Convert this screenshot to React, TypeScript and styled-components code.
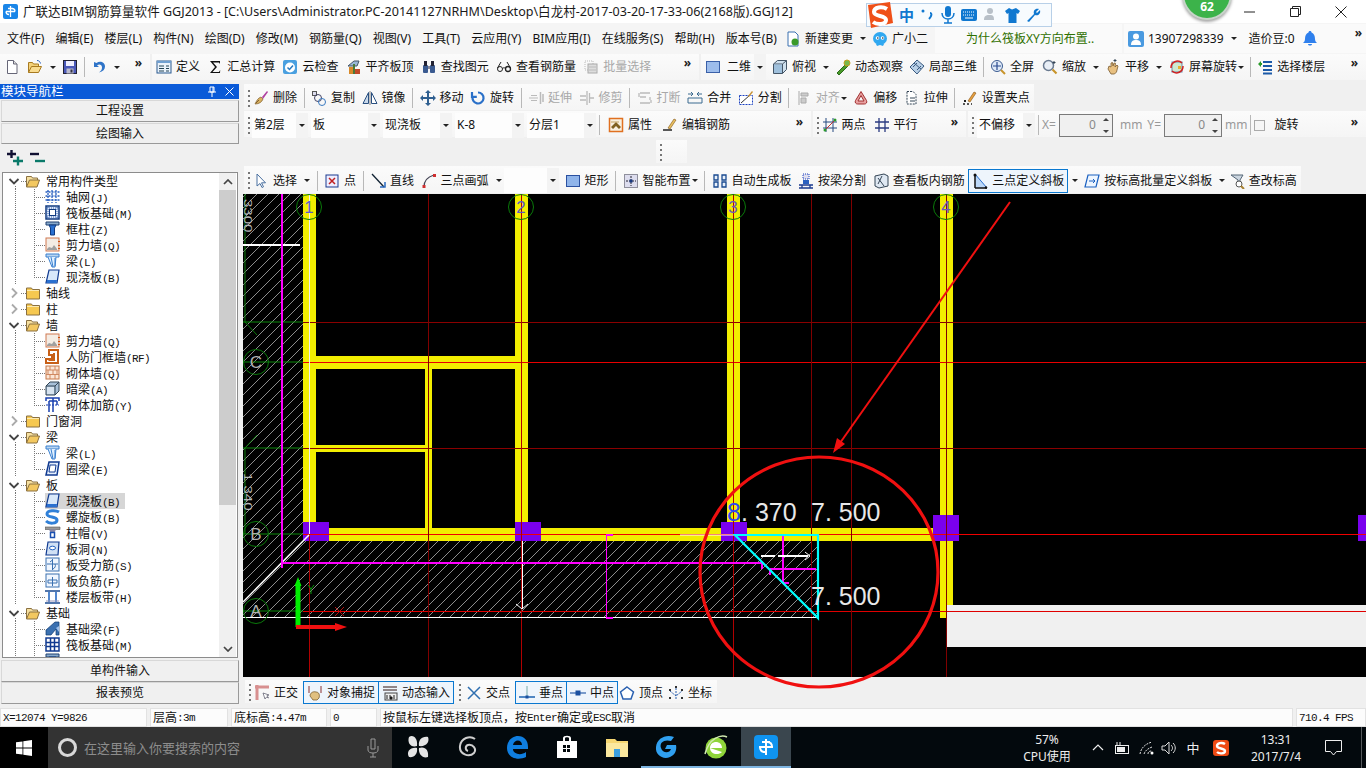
import React from 'react';
import styled, { createGlobalStyle } from 'styled-components';

const FONT = `"Noto Sans","Noto Sans CJK SC",sans-serif`;
const MONO = `"Liberation Mono","Noto Sans CJK SC",monospace`;

const Global = createGlobalStyle`
  html, body { margin: 0; padding: 0; background: #f0f0f0; overflow: hidden; }
  * { box-sizing: border-box; }
`;

const icons: Record<string, React.ReactNode> = {
  new: <><path d="M3.5 1.5h6l3.5 3.5v9.5h-9.5z" fill="#fff" stroke="#667" /><path d="M9.5 1.5v3.5h3.5" fill="#ddd" stroke="#667" /></>,
  open: <><path d="M1.5 13.5v-10h4l1 1.5h5v2.5" fill="#f4d27a" stroke="#a87a20" /><path d="M1.5 13.5l3-6h10l-3 6z" fill="#f9dc90" stroke="#a87a20" /><path d="M10 1.5c2 0 3 1 3.5 3" fill="none" stroke="#2a62c0" /></>,
  save: <><rect x="1.5" y="1.5" width="13" height="13" fill="#4a58b8" stroke="#223" /><rect x="4" y="2" width="8" height="5" fill="#eef" /><rect x="4.5" y="9.5" width="7" height="5" fill="#bbc" /><rect x="8.5" y="10.5" width="2" height="3" fill="#334" /></>,
  undo: <path d="M3 3v5h5L6 6.2c2.5-1.5 5-.5 5 2.2 0 2-1 3.5-3 5 4-.8 6-3.2 6-6 0-4-5-6.2-8.5-3.3z" fill="#2f74c8" />,
  define: <><rect x="1" y="2" width="14" height="12" fill="#eaf2fb" stroke="#2a5a90" /><rect x="1" y="2" width="14" height="2" fill="#6f9fd0" /><path d="M3 7h5M3 9.500h5M3 12h5M10 7h3M10 9.500h3M10 12h3" stroke="#245" /></>,
  sum: <path d="M3 2h10v3l-1-1.500H6l4 4.500-4.500 5H12l1.200-2L13 14H3l5-6z" fill="#111" />,
  cloud: <><rect x="1" y="1" width="14" height="14" rx="2" fill="#4aa0e0" /><circle cx="8" cy="8.500" r="5" fill="#fff" /><path d="M5.500 8.500l2 2 3.500-4" fill="none" stroke="#2a7ac0" strokeWidth="1.500" /></>,
  align: <><path d="M2 7l6-5 5-0-2 5z" fill="#9ab8d8" stroke="#456" /><rect x="3" y="8" width="4" height="7" fill="#d88a2a" /><rect x="9" y="10" width="5" height="5" fill="#c04a2a" /><rect x="7" y="5" width="2" height="10" fill="#4a7a3a" /></>,
  find: <><rect x="2" y="6" width="5" height="8" rx="1" fill="#3a5a90" /><rect x="9" y="6" width="5" height="8" rx="1" fill="#3a5a90" /><rect x="3" y="2" width="3" height="5" fill="#223" /><rect x="10" y="2" width="3" height="5" fill="#223" /><rect x="7" y="7" width="2" height="3" fill="#889" /></>,
  glasses: <><circle cx="4" cy="10" r="2.500" fill="none" stroke="#222" /><circle cx="12" cy="10" r="2.500" fill="none" stroke="#222" strokeWidth="1.300" /><path d="M6.500 9.500c1-1 2-1 3 0M1.500 9L5 3M14.500 9L11 3" fill="none" stroke="#222" /></>,
  batch: <><rect x="2" y="2" width="8" height="9" fill="none" stroke="#bbb" strokeDasharray="1 1" /><rect x="5" y="5" width="9" height="9" fill="#ddd" stroke="#aaa" /><path d="M6 8h7M6 11h7" stroke="#bbb" /></>,
  square: <rect x="1.500" y="2.500" width="13" height="11" fill="#9dbdec" stroke="#3a60a8" />,
  top: <><path d="M1.500 5l4-3.500h9v9l-4 4h-9z" fill="#cfe0ee" stroke="#456" /><path d="M1.500 5h9v9.500M10.500 5l4-3.500" fill="none" stroke="#456" /><rect x="2" y="5.500" width="8" height="8.500" fill="#9fc0dc" /></>,
  orbit: <><path d="M2 14l9-9 2 2-9 9z" fill="#4a9a2a" stroke="#2a6a1a" /><circle cx="12" cy="4" r="3" fill="#7ab84a" stroke="#c8a020" /></>,
  local3d: <><path d="M8 1l7 6-7 8-7-7z" fill="#b8cfe6" stroke="#3a5a80" /><path d="M5 4l7 6M4 8l4-4M8 11l4-4" stroke="#3a5a80" /></>,
  full: <><circle cx="7" cy="7" r="5.500" fill="#dfeaf8" stroke="#3a5a90" /><path d="M7 3v8M3 7h8" stroke="#2a4a90" strokeWidth="1.200" /><path d="M11 11l4 4" stroke="#c8942a" strokeWidth="2" /></>,
  zoom: <><circle cx="6.500" cy="6.500" r="5" fill="#e8eef6" stroke="#6a7a90" strokeWidth="1.500" /><path d="M10.500 10.500l4 4" stroke="#c8942a" strokeWidth="2.200" /><path d="M12 2v3M10.500 3.500h3" stroke="#345" /></>,
  pan: <><path d="M3 10l1-3 2 1V4l1.500-.5L8 7l1-3 1.500.3L10 8l2-2 1 1-1.500 6-2 2H6z" fill="#e8c080" stroke="#7a5a30" strokeWidth=".8" /><path d="M10 0v3M8.500 1.500h3" stroke="#345" /></>,
  rotate: <><rect x="3" y="3" width="10" height="10" fill="#cfe8d0" stroke="#68a" /><path d="M2 9a6.500 6.500 0 0 1 11-5M14 7a6.500 6.500 0 0 1-11 5" fill="none" stroke="#d02020" strokeWidth="1.500" /><rect x="9" y="7" width="3" height="3" fill="#e8b030" /></>,
  floor: <><path d="M6 3h9M6 7h9M6 11h9M6 14.500h9" stroke="#1c5aa8" strokeWidth="1.800" /><path d="M1 5l3-3v2h1v2H4v2z" fill="#2a9a2a" /></>,
  del: <><path d="M2 14c2-4 3-6 6-7l2 2c-1 3-4 5-8 5z" fill="#d8b060" stroke="#806030" strokeWidth=".7" /><path d="M9 7l5-6 1 1-5 7z" fill="#b040a0" /><path d="M3 13l3-3" stroke="#806030" /></>,
  copy: <><rect x="1.500" y="1.500" width="4" height="4" fill="#dde" stroke="#555" /><circle cx="7" cy="8" r="3.500" fill="none" stroke="#446" /><circle cx="11" cy="12" r="3.500" fill="none" stroke="#3a7ac0" /></>,
  mirror: <><path d="M6.500 2.500v11h-5.500z" fill="#c8d8ea" stroke="#2a5080" /><path d="M9.500 2.500v11h5.500z" fill="#fff" stroke="#2a5080" /><path d="M8 1v14" stroke="#888" /></>,
  move: <path d="M8 0l3 3H9v4h4V5l3 3-3 3V9H9v4h2l-3 3-3-3h2V9H3v2L0 8l3-3v2h4V3H5z" fill="#2f5f90" />,
  rot: <path d="M8 2.500a5.500 5.500 0 1 1-5.200 3.800M2 2v4.800h4.800" fill="none" stroke="#2a70c8" strokeWidth="2.200" />,
  ext: <><path d="M1 8h9M3 5.500h6M3 10.500h6" stroke="#bbb" /><path d="M12.500 2v12M15 4v8" stroke="#bbb" strokeWidth="1.500" /></>,
  trim: <path d="M8 1v14M10.500 3v10M1 6h6M1 10h6M11 8h4" stroke="#bbb" strokeWidth="1.300" />,
  brk: <path d="M3 3h10M3 7h6M13 7v3M3 13h10M2 3v4M14 10v3" stroke="#bbb" strokeWidth="1.300" fill="none" />,
  merge: <path d="M1 4h5M15 4h-5M1 8h14M1 13h14M1 8v5M15 8v5M4 2l2 2-2 2M12 2l-2 2 2 2" stroke="#3a6a90" fill="none" />,
  split: <><rect x="1.500" y="5.500" width="13" height="9" fill="#fff" stroke="#1a40c0" strokeDasharray="2 1" /><path d="M3 13l9-8" stroke="#333" /><path d="M10 6l4-5 1 1-4 5z" fill="#c89030" /></>,
  align2: <><path d="M3 1v14" stroke="#aaa" /><path d="M5 3h7v3H5zM5 8h5v5H5z" fill="#ccc" stroke="#aaa" /></>,
  offset: <path d="M8 1.500l5.500 9c1 2-.5 3.500-2 3.500H4.500c-1.500 0-3-1.500-2-3.500zM8 5.500l-3 5.500h6z" fill="#e8a0a0" stroke="#a03030" />,
  stretch: <><path d="M3 1.500h6l3 3V14H3z" fill="#fff" stroke="#345" strokeDasharray="2 1" /><path d="M6 8h5M6 11h5" stroke="#345" /></>,
  pts: <><path d="M1 14h9" stroke="#222" strokeDasharray="2 2" strokeWidth="1.500" /><path d="M6 11l6-9 2 1-6 9z" fill="#e8a040" stroke="#805010" strokeWidth=".6" /><rect x="2" y="10" width="2" height="2" fill="#222" /></>,
  prop: <><rect x="1.500" y="1.500" width="13" height="13" fill="#f8f0e0" stroke="#e07020" strokeWidth="1.500" /><path d="M3 10l5-5 5 5-2 2-3-3-3 3z" fill="#806020" /><path d="M3 5h8" stroke="#c0a060" /></>,
  edit: <><path d="M1 13h9" stroke="#222" strokeWidth="1.500" /><path d="M6 11l6-9 2 1-6 9z" fill="#e8c060" stroke="#805010" strokeWidth=".6" /></>,
  two: <><path d="M4 1v14M11 1v14M1 5h14M1 11h14" stroke="#264a80" /><path d="M2 14L14 2" stroke="#c03030" /><circle cx="3" cy="13" r="1.500" fill="#2a9a2a" /><circle cx="13" cy="3" r="1.500" fill="#2a9a2a" /></>,
  par: <path d="M5 1v14M11 1v14M1 5h14M1 11h14" stroke="#2a3a80" strokeWidth="1.300" />,
  sel: <path d="M4 1v12l3-2.500 2 4 1.500-.7-2-4h4z" fill="#fff" stroke="#4a70a0" />,
  point: <><rect x="2" y="2" width="12" height="12" fill="#eef" stroke="#1a3a90" /><path d="M5 5l6 6M11 5l-6 6" stroke="#c02020" strokeWidth="1.500" /></>,
  line: <><path d="M2 1l12 13" stroke="#123" strokeWidth="1.300" /><path d="M10 14h5V9" fill="none" stroke="#2a6ac0" strokeWidth="1.500" /></>,
  arc: <><path d="M3 14C3 8 6 4 13 2" fill="none" stroke="#445" strokeWidth="1.300" /><rect x="1.500" y="12" width="3" height="3" fill="#d03030" /><rect x="12" y="1" width="3" height="3" fill="#d03030" /></>,
  rect: <rect x="1.500" y="2.500" width="13" height="11" fill="#8fb4ea" stroke="#2a50a0" />,
  smart: <><rect x="1.500" y="1.500" width="13" height="13" fill="#dde" stroke="#334" strokeDasharray="1 1" /><path d="M8 3v10M3 8h10" stroke="#223" strokeDasharray="2 1" /><rect x="6.500" y="6.500" width="3" height="3" fill="#1a3a80" /></>,
  auto: <path d="M2 2h4v5H2zM10 2h4v5h-4zM2 9h4v5H2zM10 9h4v5h-4z" fill="#e8f0fa" stroke="#1a4a90" strokeWidth="1.300" />,
  bybeam: <><rect x="5" y="1" width="6" height="5" fill="#dde" stroke="#1a40c0" strokeDasharray="1 1" /><rect x="5" y="7" width="6" height="4" fill="#2a60c0" /><path d="M1 12h14M1 15h14M4 12v3M12 12v3" stroke="#1a3a90" strokeWidth="1.300" /></>,
  viewr: <><path d="M2 3l9-2 4 2v10l-9 2-4-2z" fill="#dfe8f2" stroke="#345" /><path d="M5 5l6 8M9 3l-4 8" stroke="#345" /></>,
  three: <><path d="M3 1v14h12z" fill="#bcd8f8" /><path d="M3 1v14M3 15h12" stroke="#111" strokeWidth="1.500" /><path d="M3 1l12 14" stroke="#2a70d0" /><circle cx="3" cy="2" r="1.500" fill="#111" /><circle cx="14" cy="14.500" r="1.200" fill="#111" /></>,
  slope: <><path d="M4 2h11l-3 12H1z" fill="#eef6ff" stroke="#1a60c0" strokeWidth="1.200" /><path d="M5 8h6M9 6l2 2-2 2" stroke="#1a60c0" fill="none" /></>,
  level: <><path d="M2 2h12l-3 5v2l-2 1V7z" fill="#ccd6e0" stroke="#567" /><circle cx="10" cy="11" r="3" fill="#fff" stroke="#555" /><path d="M12 13l3 3" stroke="#a88030" strokeWidth="2" /></>,
  ortho: <><path d="M1 2h14M3 0v15" stroke="#d89090" strokeWidth="3" /><path d="M9 8l2 6 1.500-2 2 1-1.500-2.500 2-.5z" fill="#fff" stroke="#556" strokeWidth=".7" /></>,
  snap: <><path d="M2 1v7M14 1v7" stroke="#883030" /><path d="M3 11c0-3 3-5 6-4 3 0 4 3 3 6l-2 2H6z" fill="#e0c080" stroke="#705020" strokeWidth=".7" /></>,
  dyn: <><path d="M1 2h14M1 5h14" stroke="#706060" strokeWidth="1.300" /><rect x="3" y="8" width="12" height="7" fill="#eee" stroke="#444" /><path d="M5 10v4M8 10v4h2v-2H8M12 10v4" stroke="#222" /></>,
  inter: <path d="M2 2l12 12M14 2L2 14" stroke="#2f6fb0" strokeWidth="1.500" />,
  perp: <><path d="M0 12h16" stroke="#1a60b0" strokeWidth="1.500" /><path d="M8 1v10" stroke="#7aa" /><rect x="6.500" y="10.500" width="3" height="3" fill="#1a50a0" /></>,
  mid: <><path d="M0 8h16" stroke="#3a6ab0" strokeWidth="1.300" /><rect x="5.500" y="5.500" width="5" height="5" fill="#1a50a0" /></>,
  vertex: <path d="M8 2l6.500 5-2.500 7H4L1.500 7z" fill="#fff" stroke="#2a60b0" strokeWidth="1.500" />,
  coord: <><path d="M8 3v12M2 6l6 5 6-5" stroke="#2a60b0" fill="none" strokeDasharray="2 1" /><rect x="1" y="4" width="2" height="2" fill="#333" /><rect x="7" y="1" width="2" height="2" fill="#333" /><rect x="13" y="4" width="2" height="2" fill="#333" /><rect x="1" y="12" width="2" height="2" fill="#333" /><rect x="13" y="12" width="2" height="2" fill="#333" /></>,
  doc: <><path d="M3 1h7l3 3v11H3z" fill="#fff" stroke="#3a70b0" /><circle cx="10" cy="11" r="3.500" fill="#3a9a2a" /></>,
  mascot: <><ellipse cx="8" cy="7.500" rx="7" ry="6.500" fill="#30a8f0" /><path d="M4 13l1 2 3-1 3 1 1-2z" fill="#30a8f0" /><circle cx="5.500" cy="7" r="1.800" fill="#fff" /><circle cx="10.500" cy="7" r="1.800" fill="#fff" /><circle cx="5.800" cy="7" r=".8" fill="#123" /><circle cx="10.800" cy="7" r=".8" fill="#123" /></>,
  user: <><rect x="0" y="0" width="16" height="16" rx="2" fill="#4a9ae0" /><circle cx="8" cy="5.500" r="3" fill="#fff" /><path d="M3 14c0-4 2-5 5-5s5 1 5 5z" fill="#fff" /></>,
  bell: <path d="M8 0c1 0 1.500.7 1.500 1.500C12 2.500 13 5 13 8c0 2 1 3 2 4H1c1-1 2-2 2-4 0-3 1-5.500 3.500-6.500C6.500.7 7 0 8 0zM6 13h4c0 2-4 2-4 0z" fill="#2f80ed" />,
  plus: <><path d="M0 4h9M4.500 0v8" stroke="#113" strokeWidth="2.400" /><path d="M6 11h10M11 6.500v9" stroke="#0a7a6a" strokeWidth="2.400" /></>,
  minus: <><path d="M1 4h9" stroke="#113" strokeWidth="2.400" /><path d="M6 11h10" stroke="#0a7a6a" strokeWidth="2.400" /></>,
  folderO: <><path d="M1.500 14V3.500h5l1 1.500h5v2" fill="#f6e0a0" stroke="#8a7040" /><path d="M1.500 14l3-7h10l-2.500 7z" fill="#f3c860" stroke="#8a7040" /></>,
  folderC: <><path d="M1.500 14V3h5l1 1.500h7V14z" fill="#f6c850" stroke="#8a7040" /><path d="M2 5.500h12" stroke="#fbe9b0" /></>,
  grid: <path d="M3 1v13M7 1v13M11 1v13M0.500 3h14M0.500 7h14M0.500 11h14" stroke="#2a60c0" strokeWidth="1.300" strokeDasharray="2 1" />,
  raft: <><rect x="1" y="1" width="13" height="13" fill="#dfe8f8" stroke="#103a80" strokeWidth="1.500" /><rect x="4.500" y="4.500" width="6" height="6" fill="#fff" stroke="#103a80" /><path d="M2 3h11M2 12h11M3 2v11M12 2v11" stroke="#3060b0" strokeDasharray="1 1" /></>,
  column: <><path d="M1 1h13v3H1z" fill="#88aacc" stroke="#204070" /><path d="M4 4h7l-1.500 3v7H5.500V7z" fill="#2a70d0" stroke="#103a80" /></>,
  shear: <><rect x="1" y="1" width="13" height="13" fill="#f4ece4" stroke="#d07850" /><path d="M2 12l2-2 3 1 2-3 3 4v1H2z" fill="#a0a0a0" /><path d="M14 4v1M14 8v1M14 11v1" stroke="#d05010" strokeWidth="2" /></>,
  beam: <><path d="M1 1h13v3H1z" fill="#b8d4f0" stroke="#3a80d0" /><path d="M3 4l4 10h3l1-10" fill="#e0f0ff" stroke="#3a80d0" /><path d="M6 4l2 10M10 5v8" stroke="#3a80d0" /></>,
  slab: <><path d="M4 1h10l-2 13H1z" fill="#d8e8fa" stroke="#103a90" strokeWidth="1.200" /><path d="M2 11h10l-.5 3H1.500z" fill="#2a70d0" /></>,
  shelter: <path d="M4 1h9v13H1v-4h6V6H4zM9 4v7H3.500" fill="none" stroke="#c86018" strokeWidth="2" />,
  masonry: <><rect x="1" y="1" width="13" height="13" fill="#fbe6d6" stroke="#c87848" /><path d="M1 5h13M1 9.500h13M5 1v4M10 1v4M3 5v4.500M8 5v4.500M12 5v4.500M5 9.500V14M10 9.500V14" stroke="#d08860" /></>,
  hidden: <><path d="M1 5l4-4h9v9l-4 4H1z" fill="#a8c0d8" stroke="#345" /><path d="M1 5h9v9M10 5l4-4" fill="none" stroke="#345" /><rect x="2" y="6" width="7" height="7" fill="#d8e4f0" /></>,
  rein: <><path d="M1 4V1h13v3M4 4h8M8 1v14M4 4v11M12 4v4" fill="none" stroke="#1a40b0" strokeWidth="1.500" /><path d="M1 8h13" stroke="#1a40b0" strokeDasharray="2 1" /></>,
  ring: <><path d="M4 1h10l-2 13H1z" fill="#e4eefc" stroke="#103a90" strokeWidth="1.500" /><path d="M5 4h6l-1 7H4z" fill="#fff" stroke="#103a90" /></>,
  spiral: <path d="M14 3c-3-2-12-2-12 2s10 2 10 6-8 4-11 1" fill="none" stroke="#3080d8" strokeWidth="3" />,
  cap: <><path d="M0 2h15v2.500H0z" fill="#999" stroke="#555" strokeWidth=".6" /><path d="M4 4.500h7l-1.500 3h-4z" fill="#88a" /><rect x="5.500" y="7.500" width="4" height="5" fill="#fff" stroke="#1a50b0" strokeWidth="1.500" /></>,
  hole: <><path d="M3 1h11l-1 13H1z" fill="#d0e0f4" stroke="#103a90" strokeWidth="1.200" /><ellipse cx="7.500" cy="7" rx="3" ry="1.800" fill="#fff" stroke="#2060c0" /></>,
  rebarS: <><rect x="1" y="1" width="13" height="13" fill="#f0f6fe" stroke="#3a70b0" /><path d="M7.500 2v11M2 7h11M5 5l2.500-2M10 7c1 2 0 4-2 5" stroke="#3a70b0" fill="none" /></>,
  rebarF: <><rect x="1" y="1" width="13" height="13" fill="#f0f6fe" stroke="#3a70b0" /><path d="M7.500 4v9M3 7h9M3 10h9M3 7v3M12 7v3" stroke="#3a70b0" fill="none" /></>,
  band: <><path d="M0 2h15M0 14h15" stroke="#1a4a90" strokeWidth="1.500" /><path d="M4 3v10M11 3v10" stroke="#1a60c0" strokeWidth="1.500" /><path d="M1 12h13" stroke="#99b" /></>,
  fbeam: <><path d="M1 14V9L10 1h4v13h-3V8l-5 6z" fill="#3a70b0" stroke="#103a70" strokeWidth=".7" /><path d="M11 7l3-2v6z" fill="#9fc0ea" /></>,
  raft2: <><rect x="1" y="1" width="13" height="13" fill="#fff" stroke="#103a90" strokeWidth="1.500" /><path d="M5.500 1v13M9.500 1v13M1 5.500h13M1 9.500h13" stroke="#103a90" strokeWidth="1.500" /></>,
};

const Svg = styled.svg`
  flex: none;
  display: block;
`;
const Ic: React.FC<{ n: string; s?: number }> = ({ n, s = 16 }) => (
  <Svg width={s} height={s} viewBox="0 0 16 16">{icons[n]}</Svg>
);

const Root = styled.div`
  position: relative;
  width: 1366px;
  height: 768px;
  display: flex;
  flex-direction: column;
  overflow: hidden;
  background: #f0f0f0;
  font: 12px/16px ${FONT};
  color: #111;
`;

/* ---------- title ---------- */
const TitleBar = styled.header`
  height: 23px;
  background: #fff;
  display: flex;
  align-items: center;
  padding-left: 3px;
`;
const TitleText = styled.div`
  margin-left: 5px;
  font-size: 12.55px;
  white-space: nowrap;
  color: #1a1a1a;
`;
const WinControls = styled.div`
  margin-left: auto;
  margin-right: 2px;
  display: flex;
`;
const WinBtn = styled.div`
  width: 46px;
  height: 23px;
  display: flex;
  align-items: center;
  justify-content: center;
`;

/* ---------- menu ---------- */
const MenuBar = styled.nav`
  height: 31px;
  background: #f5f5f5;
  display: flex;
  align-items: center;
  padding-left: 7px;
  white-space: nowrap;
`;
const MenuItem = styled.span`
  margin-right: 11.15px;
`;
const MenuTool = styled.span<{ $ml?: number }>`
  display: inline-flex;
  align-items: center;
  gap: 4px;
  margin-left: ${p => p.$ml ?? 0}px;
  margin-right: 6px;
`;
const NewsPanel = styled.div`
  margin-left: 1px;
  width: 187px;
  height: 29px;
  background: #fafafa;
  color: #2f7000;
  display: flex;
  align-items: center;
  padding-left: 31px;
`;
const UserPanel = styled.div`
  margin-left: 2px;
  flex: 1;
  height: 29px;
  background: #fafafa;
  display: flex;
  align-items: center;
  padding-left: 4px;
  gap: 4px;
`;
const UserNote = styled.span<{ $ml: number }>`
  margin-left: ${p => p.$ml}px;
  display: inline-flex;
`;
const More = styled.span`
  font-size: 12px;
  font-weight: 700;
  line-height: 12px;
  align-self: flex-start;
  margin-top: 3px;
  color: #222;
`;
const PushRight = styled(More)`
  margin-left: auto;
  margin-right: 4px;
`;

/* ---------- toolbars ---------- */
const TopTools = styled.div`
  height: 29px;
  padding-bottom: 3px;
  display: flex;
  align-items: stretch;
  gap: 2px;
`;
const Bar = styled.div<{ $w?: number; $gap?: number }>`
  ${p => (p.$w ? `width:${p.$w}px;flex:none;` : '')}
  background: linear-gradient(#fbfbfb, #f5f5f5);
  display: flex;
  align-items: center;
  gap: ${p => p.$gap ?? 6.5}px;
  padding: 0 4px;
  white-space: nowrap;
`;
const BarFill = styled(Bar)`
  flex: 1;
`;
const Row = styled.div<{ $h: number; $mt: number; $pl?: number }>`
  height: ${p => p.$h}px;
  margin-top: ${p => p.$mt}px;
  padding-left: ${p => p.$pl ?? 4}px;
  display: flex;
  align-items: stretch;
  gap: 2px;
  & > div { padding-top: 2px; }
`;
const Grip = styled.i<{ $ml?: number }>`
  flex: none;
  width: 2px;
  height: 17px;
  background: repeating-linear-gradient(#777 0 2px, transparent 2px 5px);
  margin-left: ${p => p.$ml ?? 0}px;
  margin-right: -3.5px;
`;
const Sep = styled.i`
  flex: none;
  width: 1px;
  height: 20px;
  background: #b8b8b8;
`;
const ToolBtn = styled.span<{ $d?: boolean; $ml?: number }>`
  display: inline-flex;
  align-items: center;
  gap: 4px;
  flex: none;
  color: ${p => (p.$d ? '#a8a8a8' : '#111')};
  margin-left: ${p => p.$ml ?? 0}px;
`;
const Caret = styled.i<{ $tight?: boolean }>`
  width: 0;
  height: 0;
  flex: none;
  margin-left: ${p => (p.$tight ? -3 : 3)}px;
  border-left: 3px solid transparent;
  border-right: 3px solid transparent;
  border-top: 3px solid #222;
`;
const Active = styled.span<{ $ml?: number }>`
  display: inline-flex;
  align-items: center;
  gap: 4px;
  height: 24px;
  padding: 0 3px;
  margin-left: ${p => p.$ml ?? 0}px;
  border: 1px solid #0a78d0;
  background: #eef5fc;
  flex: none;
`;
const Combo = styled.span<{ $w: number; $ml?: number }>`
  width: ${p => p.$w}px;
  height: 25px;
  flex: none;
  background: #fdfdfd;
  display: flex;
  align-items: center;
  justify-content: space-between;
  padding-left: 2px;
  margin-left: ${p => p.$ml ?? 0}px;
`;
const ComboArrow = styled.span<{ $ml?: number }>`
  width: 12px;
  height: 100%;
  background: #f3f3f3;
  display: flex;
  align-items: center;
  justify-content: center;
  margin-left: ${p => p.$ml ?? 0}px;
  flex: none;
  ${Caret} { margin: 0; }
`;
const Dim = styled.span<{ $ml?: number }>`
  color: #999;
  flex: none;
  margin-left: ${p => p.$ml ?? 0}px;
`;
const Spin = styled.span<{ $w: number }>`
  width: ${p => p.$w}px;
  height: 23px;
  flex: none;
  border: 1px solid #7a7a7a;
  background: #f0f0f0;
  color: #888;
  display: flex;
  align-items: center;
  justify-content: flex-end;
  padding-right: 3px;
  gap: 7px;
`;
const SpinArrows = styled.span`
  display: flex;
  flex-direction: column;
  gap: 9px;
`;
const Up = styled.i`
  border-left: 3px solid transparent;
  border-right: 3px solid transparent;
  border-bottom: 3px solid #444;
`;
const Down = styled.i`
  border-left: 3px solid transparent;
  border-right: 3px solid transparent;
  border-top: 3px solid #444;
`;
const Check = styled.i`
  width: 11px;
  height: 11px;
  flex: none;
  border: 1px solid #aaa;
  background: #f6f6f6;
`;
const StubBar = styled(Bar)`
  margin-left: 412px;
`;
const SnapBtn = styled(Active)`
  height: 23px;
  margin-right: -6px;
`;

/* ---------- main ---------- */
const Main = styled.main`
  height: 625px;
  display: flex;
`;
const Left = styled.aside`
  width: 240px;
  flex: none;
  padding: 1px 0 0 0;
  display: flex;
  flex-direction: column;
`;
const PanelHead = styled.div`
  height: 15px;
  width: 239px;
  background: #0a5ad8;
  color: #fff;
  font-size: 12.5px;
  display: flex;
  align-items: center;
  padding: 0 5px 0 1px;
  gap: 8px;
  flex: none;
`;
const HeadSpacer = styled.span`
  flex: 1;
`;
const NavBtn = styled.div<{ $mt?: number; $h?: number }>`
  width: 238px;
  height: ${p => p.$h ?? 22}px;
  margin: ${p => p.$mt ?? 0}px 0 0 1px;
  background: #f0f0f0;
  border: 1px solid #d8d8d8;
  border-right-color: #999;
  border-bottom-color: #999;
  display: flex;
  align-items: center;
  justify-content: center;
  flex: none;
`;
const NavTools = styled.div`
  height: 28px;
  display: flex;
  align-items: center;
  gap: 6px;
  padding-left: 7px;
  flex: none;
`;
const TreeBox = styled.div`
  height: 486px;
  width: 236px;
  margin-left: 2px;
  border: 1px solid #8c8c8c;
  background: #fff;
  display: flex;
  flex: none;
  overflow: hidden;
`;
const TreeList = styled.div`
  flex: 1;
  min-width: 0;
  height: 100%;
  overflow: hidden;
`;
const dots = (dir: string) => `repeating-linear-gradient(${dir}, #777 0 1px, transparent 1px 2px)`;
const FolderRow = styled.div<{ $open?: boolean }>`
  height: 16px;
  display: flex;
  align-items: center;
  padding-left: 5px;
  gap: 5px;
  background: ${dots('to right')} 18px 8px / 5px 1px no-repeat
    ${p => (p.$open ? `, ${dots('to bottom')} 12px 13px / 1px 3px no-repeat` : '')};
`;
const RowLabel = styled.span`
  display: block;
  margin-top: 2px;
  line-height: 14px;
  white-space: nowrap;
`;
const ChildRow = styled.div<{ $last?: boolean }>`
  height: 16px;
  display: flex;
  align-items: center;
  padding-left: 42px;
  background:
    ${dots('to bottom')} 12px 0 / 1px 100% no-repeat,
    ${dots('to bottom')} 31px 0 / 1px ${p => (p.$last ? '50%' : '100%')} no-repeat,
    ${dots('to right')} 31px 8px / 11px 1px no-repeat;
`;
const RowBody = styled.span<{ $sel?: boolean }>`
  display: inline-flex;
  align-items: center;
  height: 16px;
  gap: 5px;
  padding-right: 5px;
  background: ${p => (p.$sel ? '#d6d6d6' : 'transparent')};
`;
const Code = styled.span`
  font: 11px/14px ${MONO};
  letter-spacing: -0.6px;
`;
const Chevron = styled.svg`
  width: 12px;
  height: 12px;
  flex: none;
`;
const ScrollV = styled.div`
  width: 17px;
  flex: none;
  margin-right: 1px;
  display: flex;
  flex-direction: column;
  background: #f0f0f0;
`;
const ScrollBtn = styled.div`
  height: 17px;
  display: flex;
  align-items: center;
  justify-content: center;
  flex: none;
`;
const Thumb = styled.div`
  height: 315px;
  background: #cdcdcd;
  flex: none;
`;
const Track = styled.div`
  flex: 1;
`;

const Right = styled.section`
  flex: 1;
  min-width: 0;
  display: flex;
  flex-direction: column;
`;
const CanvasWrap = styled.div`
  height: 483px;
  margin: 1px 0 0 3px;
  background: #000;
  flex: none;
`;
const CanvasSvg = styled.svg`
  display: block;
`;

/* ---------- status ---------- */
const Status = styled.footer`
  height: 19px;
  display: flex;
  flex: none;
  background: #f0f0f0;
  gap: 3px;
`;
const Cell = styled.div<{ $w?: number }>`
  ${p => (p.$w ? `width:${p.$w}px;flex:none;` : 'flex:1;')}
  background: #fcfcfc;
  border: 1px solid #e2e2e2;
  display: flex;
  align-items: center;
  padding-left: 2px;
  font-size: 12px;
  white-space: nowrap;
`;

/* ---------- taskbar ---------- */
const Taskbar = styled.div`
  height: 41px;
  flex: none;
  background: #03090d;
  display: flex;
  align-items: stretch;
  color: #eee;
`;
const StartBtn = styled.div`
  width: 48px;
  background: #000;
  display: flex;
  align-items: center;
  justify-content: center;
  flex: none;
`;
const SearchBox = styled.div`
  width: 344px;
  background: #333;
  display: flex;
  align-items: center;
  padding-left: 10px;
  gap: 7px;
  color: #8d8d8d;
  font-size: 13px;
  flex: none;
`;
const SearchMic = styled.span`
  margin-left: auto;
  margin-right: 13px;
  display: flex;
`;
const Ring = styled.i`
  width: 19px;
  height: 19px;
  border-radius: 50%;
  border: 3px solid #d8d8d8;
  flex: none;
`;
const AppSlot = styled.div<{ $on?: boolean; $run?: boolean }>`
  width: 49.7px;
  flex: none;
  display: flex;
  align-items: center;
  justify-content: center;
  background: ${p => (p.$on ? '#3a464e' : 'transparent')};
  border-bottom: 2px solid ${p => (p.$on || p.$run ? '#7db4e0' : 'transparent')};
`;
const Apps = styled.div`
  display: flex;
  padding-left: 1px;
`;
const TrayFill = styled.div`
  flex: 1;
`;
const Cpu = styled.div`
  width: 62px;
  margin-right: 8px;
  font-size: 12px;
  line-height: 17px;
  text-align: center;
  align-self: center;
`;
const TrayIcon = styled.div<{ $w: number }>`
  width: ${p => p.$w}px;
  flex: none;
  display: flex;
  align-items: center;
  justify-content: center;
  font-size: 13px;
`;
const Clock = styled.div`
  width: 80px;
  text-align: center;
  font-size: 12px;
  line-height: 17px;
  align-self: center;
  flex: none;
`;
const ShowDesktop = styled.div`
  width: 16px;
  flex: none;
  padding-left: 11px;
`;
const DeskLine = styled.i`
  display: block;
  width: 1px;
  height: 100%;
  background: #55595c;
`;

/* ---------- overlays ---------- */
const SogouBar = styled.div`
  position: absolute;
  left: 866px;
  top: 3px;
  width: 186px;
  height: 24px;
  display: flex;
  align-items: center;
  background: #f7fbfe;
  border: 1px solid #b8d0e8;
  padding-left: 32px;
  gap: 6px;
  color: #1078d0;
`;
const SogouLogo = styled.svg`
  position: absolute;
  left: -1px;
  top: -2px;
`;
const SgHan = styled.b`
  font-size: 15px;
  width: 16px;
`;
const Badge = styled.div`
  position: absolute;
  left: 1178px;
  top: 0;
  width: 58px;
  height: 24px;
  overflow: hidden;
  color: #fff;
  font: 700 12px/14px "Noto Sans", sans-serif;
  text-align: center;
  padding-top: 0;
  &::before {
    content: '';
    position: absolute;
    left: 6px;
    top: -30px;
    width: 46px;
    height: 48px;
    border-radius: 50%;
    background: #3cb34a;
    box-shadow: 0 0 0 2px #c8d4ca, 0 2px 3px 2px rgba(0, 0, 0, .35);
  }
`;
const BadgeNum = styled.span`
  position: relative;
  display: block;
`;
const Annot = styled.svg`
  position: absolute;
  left: 0;
  top: 0;
  pointer-events: none;
`;

type T = { i?: string; t?: string; a?: boolean; n?: boolean; d?: boolean; s?: boolean; m?: number };
const Tool: React.FC<T> = ({ i, t, a, n, d, s, m }) =>
  s ? <Sep /> : (
    <ToolBtn $d={d} $ml={m}>
      {i && <Ic n={i} />}
      {t && <span>{t}</span>}
      {a && <Caret $tight={n} />}
    </ToolBtn>
  );
const Tools: React.FC<{ list: T[] }> = ({ list }) => <>{list.map((x, k) => <Tool key={k} {...x} />)}</>;

const row0a: T[] = [{ i: 'define', t: '定义' }, { i: 'sum', t: '汇总计算' }, { i: 'cloud', t: '云检查' }, { i: 'align', t: '平齐板顶' }, { i: 'find', t: '查找图元' }, { i: 'glasses', t: '查看钢筋量' }, { i: 'batch', t: '批量选择', d: true }];
const row0b: T[] = [{ i: 'top', t: '俯视', a: true }, { i: 'orbit', t: '动态观察' }, { i: 'local3d', t: '局部三维' }, { s: true }, { i: 'full', t: '全屏' }, { i: 'zoom', t: '缩放', a: true, m: 2 }, { i: 'pan', t: '平移', a: true }, { i: 'rotate', t: '屏幕旋转', a: true, n: true, m: 1 }, { s: true }, { i: 'floor', t: '选择楼层' }];
const row1: T[] = [{ i: 'del', t: '删除' }, { s: true }, { i: 'copy', t: '复制' }, { i: 'mirror', t: '镜像' }, { s: true }, { i: 'move', t: '移动' }, { i: 'rot', t: '旋转' }, { s: true }, { i: 'ext', t: '延伸', d: true }, { i: 'trim', t: '修剪', d: true }, { s: true }, { i: 'brk', t: '打断', d: true }, { i: 'merge', t: '合并' }, { i: 'split', t: '分割' }, { s: true }, { i: 'align2', t: '对齐', d: true, a: true, n: true }, { i: 'offset', t: '偏移' }, { i: 'stretch', t: '拉伸' }, { s: true }, { i: 'pts', t: '设置夹点' }];
const row3a: T[] = [{ i: 'sel', t: '选择', a: true }, { s: true }, { i: 'point', t: '点' }, { s: true }, { i: 'line', t: '直线' }, { i: 'arc', t: '三点画弧', a: true }];
const row3b: T[] = [{ i: 'rect', t: '矩形', m: -1 }, { s: true }, { i: 'smart', t: '智能布置', a: true, n: true }, { s: true }, { i: 'auto', t: '自动生成板' }, { i: 'bybeam', t: '按梁分割' }, { i: 'viewr', t: '查看板内钢筋' }];

type TreeItem = { f?: 'o' | 'c'; i?: string; t?: string; c?: string; last?: boolean; sel?: boolean };
const tree: TreeItem[] = [
  { f: 'o', t: '常用构件类型' },
  { i: 'grid', t: '轴网', c: 'J' }, { i: 'raft', t: '筏板基础', c: 'M' }, { i: 'column', t: '框柱', c: 'Z' }, { i: 'shear', t: '剪力墙', c: 'Q' }, { i: 'beam', t: '梁', c: 'L' }, { i: 'slab', t: '现浇板', c: 'B', last: true },
  { f: 'c', t: '轴线' }, { f: 'c', t: '柱' }, { f: 'o', t: '墙' },
  { i: 'shear', t: '剪力墙', c: 'Q' }, { i: 'shelter', t: '人防门框墙', c: 'RF' }, { i: 'masonry', t: '砌体墙', c: 'Q' }, { i: 'hidden', t: '暗梁', c: 'A' }, { i: 'rein', t: '砌体加筋', c: 'Y', last: true },
  { f: 'c', t: '门窗洞' }, { f: 'o', t: '梁' },
  { i: 'beam', t: '梁', c: 'L' }, { i: 'ring', t: '圈梁', c: 'E', last: true },
  { f: 'o', t: '板' },
  { i: 'slab', t: '现浇板', c: 'B', sel: true }, { i: 'spiral', t: '螺旋板', c: 'B' }, { i: 'cap', t: '柱帽', c: 'V' }, { i: 'hole', t: '板洞', c: 'N' }, { i: 'rebarS', t: '板受力筋', c: 'S' }, { i: 'rebarF', t: '板负筋', c: 'F' }, { i: 'band', t: '楼层板带', c: 'H', last: true },
  { f: 'o', t: '基础' },
  { i: 'fbeam', t: '基础梁', c: 'F' }, { i: 'raft2', t: '筏板基础', c: 'M' }, { i: 'column' },
];

const TreeRows: React.FC = () => (
  <>
    {tree.map((r, k) => r.f ? (
      <FolderRow key={k} $open={r.f === 'o'}>
        <Chevron viewBox="0 0 12 12">
          {r.f === 'o'
            ? <path d="M1.5 4l4.500 4.500L10.500 4" fill="none" stroke="#444" strokeWidth="1.800" />
            : <path d="M4 1.500L8.500 6 4 10.500" fill="none" stroke="#aaa" strokeWidth="1.800" />}
        </Chevron>
        <Ic n={r.f === 'o' ? 'folderO' : 'folderC'} />
        <RowLabel>{r.t}</RowLabel>
      </FolderRow>
    ) : (
      <ChildRow key={k} $last={r.last}>
        <RowBody $sel={r.sel}>
          <Ic n={r.i!} />
          {r.t && <RowLabel>{r.t}<Code>({r.c})</Code></RowLabel>}
        </RowBody>
      </ChildRow>
    ))}
  </>
);

const CadLines: React.FC = () => (
  <>
    <defs>
      <pattern id="hatch" patternUnits="userSpaceOnUse" width="11" height="11">
        <path d="M-1 12L12 -1" stroke="#c8c8c8" strokeWidth=".7" />
      </pattern>
      <clipPath id="cv"><rect x="243" y="194" width="1123" height="483" /></clipPath>
    </defs>
    <g clipPath="url(#cv)">
      <rect x="243" y="194" width="60" height="347" fill="url(#hatch)" />
      <rect x="243" y="541" width="575" height="76" fill="url(#hatch)" />

      <path d="M245 194V322M245 448V534" stroke="#0a7a0a" fill="none" />
      <path d="M245 322l12 13M245 448l12-13" stroke="#0a7a0a" fill="none" />
      <path d="M243 322H303M243 448H303M243 362H303M243 534H303M243 611H303" stroke="#0a8a0a" fill="none" />

      <g fill="#f2ee00" shapeRendering="crispEdges">
        <rect x="303" y="194" width="13" height="347" />
        <rect x="515" y="194" width="13" height="347" />
        <rect x="727" y="194" width="13" height="347" />
        <rect x="940" y="194" width="13" height="424" />
        <rect x="303" y="528" width="637" height="13" />
        <rect x="316" y="356" width="212" height="13" />
        <rect x="425" y="369" width="7" height="159" />
        <rect x="316" y="445" width="109" height="7" />
      </g>

      <g fill="#7a00ee" shapeRendering="crispEdges">
        <rect x="303" y="522" width="26" height="19" />
        <rect x="515" y="522" width="26" height="19" />
        <rect x="721" y="522" width="26" height="19" />
        <rect x="933" y="515" width="26" height="26" />
        <rect x="1358" y="515" width="8" height="26" />
      </g>

      <rect x="947" y="605" width="419" height="42" fill="#f0f0f0" />

      <g shapeRendering="crispEdges" fill="none">
        <path d="M303 322H1366M303 448H1366" stroke="#8a0000" />
        <path d="M303 362H1366" stroke="#e80000" />
        <path d="M303 534H1366" stroke="#f00000" />
        <path d="M303 611H1366" stroke="#e00000" />
        <path d="M309 534V677M521 194V677M733 194V677" stroke="#b00000" />
        <path d="M428 194V677M811 194V677M851 194V677M946 194V677" stroke="#800000" />
        <path d="M309 194V534" stroke="#eee" />
      </g>

      <path d="M243 602L309 535" stroke="#fff" strokeWidth="1.500" />
      <path d="M243 245H300M243 617.500H818" stroke="#fff" strokeWidth="1.500" shapeRendering="crispEdges" />
      <path d="M522 541V609" stroke="#fff" shapeRendering="crispEdges" />
      <path d="M516 604l6 5 6-5" stroke="#fff" fill="none" />
      <path d="M680 535H734" stroke="#fff" />

      <g stroke="#ff00ff" strokeWidth="1.700" fill="none" shapeRendering="crispEdges">
        <path d="M282 194V568M282 563H762M762 563V569" />
        <path d="M770 569H816M770 569V575M783 535V583M783 583H789" />
        <path d="M606.500 535V618M606 535H613M606 618H613" />
      </g>

      <path d="M735 535H818V618Z" stroke="#00ffff" strokeWidth="2.200" fill="none" />
      <path d="M761 556H810" stroke="#fff" strokeWidth="2" strokeDasharray="14 3 30" />
      <path d="M805 552l5 4-5 4" stroke="#fff" fill="none" />

      <g fill="none" stroke="#0a7a0a">
        <circle cx="309" cy="207" r="12.500" />
        <circle cx="521" cy="207" r="12.500" />
        <circle cx="733" cy="207" r="12.500" />
        <circle cx="946" cy="207" r="12.500" />
        <circle cx="256" cy="362" r="12.500" />
        <circle cx="256" cy="534" r="12.500" />
        <circle cx="256" cy="611" r="12.500" />
      </g>
      <g fontFamily="Liberation Sans, sans-serif" fontSize="17" textAnchor="middle">
        <text x="309" y="213" fill="#5a5ac8">1</text>
        <text x="521" y="213" fill="#5a5ac8">2</text>
        <text x="733" y="213" fill="#6a5ab8">3</text>
        <text x="946" y="213" fill="#6a5ab8">4</text>
        <text x="256" y="368" fill="#b0b0b0">C</text>
        <text x="256" y="540" fill="#b0b0b0">B</text>
        <text x="256" y="617" fill="#b0b0b0">A</text>
      </g>
      <g fontFamily="Liberation Sans, sans-serif" fontSize="15" fill="#b8b8b8">
        <text transform="translate(244 199) rotate(90) scale(1 .75)">3300</text>
        <text transform="translate(244 473) rotate(90) scale(1 .75)">1 340</text>
      </g>

      <g fontFamily="Liberation Sans, sans-serif" fontSize="25" fill="#e8e8e8">
        <text x="727" y="521" fill="#2a4af0">8</text>
        <text x="741" y="521">. 370</text>
        <text x="811" y="521">7. 500</text>
        <text x="811" y="605">7. 500</text>
      </g>

      <path d="M298 627V584" stroke="#00ee00" strokeWidth="5" />
      <path d="M298 577l3.500 9h-7z" fill="#00ee00" />
      <path d="M296 627H336" stroke="#f01010" strokeWidth="4" />
      <path d="M347 627l-12-4v8z" fill="#f01010" />
      <path d="M308 585l3 4 3-4M311 589v5" stroke="#0a9a0a" fill="none" />
      <path d="M335 607l9 9M344 607l-9 9" stroke="#b01010" />
    </g>
  </>
);

const Tb = styled.svg`
  display: block;
  flex: none;
`;

export default function App() {
  return (
    <Root>
      <Global />
      <TitleBar>
        <Tb width="15" height="15" viewBox="0 0 15 15">
          <rect width="15" height="15" rx="2" fill="#1a86e8" />
          <path d="M7.500 2v11M3 7.500h9M5 4.500h5M3 7.500c0 2 1.500 3 3 3M12 7.500c0-2-1.500-3-3-3" stroke="#fff" strokeWidth="1.300" fill="none" />
        </Tb>
        <TitleText>广联达BIM钢筋算量软件 GGJ2013 - [C:\Users\Administrator.PC-20141127NRHM\Desktop\白龙村-2017-03-20-17-33-06(2168版).GGJ12]</TitleText>
        <WinControls>
          <WinBtn><Tb width="11" height="11" viewBox="0 0 11 11"><path d="M0 6h11" stroke="#222" /></Tb></WinBtn>
          <WinBtn><Tb width="11" height="11" viewBox="0 0 11 11"><path d="M.5 2.500h8v8h-8zM2.500 2.500v-2h8v8h-2" fill="none" stroke="#222" /></Tb></WinBtn>
          <WinBtn><Tb width="12" height="12" viewBox="0 0 12 12"><path d="M.5.500l11 11M11.500.500l-11 11" stroke="#222" /></Tb></WinBtn>
        </WinControls>
      </TitleBar>

      <MenuBar>
        {['文件(F)', '编辑(E)', '楼层(L)', '构件(N)', '绘图(D)', '修改(M)', '钢筋量(Q)', '视图(V)', '工具(T)', '云应用(Y)', 'BIM应用(I)', '在线服务(S)', '帮助(H)', '版本号(B)'].map(m => <MenuItem key={m}>{m}</MenuItem>)}
        <MenuTool $ml={-3}><Ic n="doc" />新建变更<Caret /></MenuTool>
        <MenuTool><Ic n="mascot" />广小二</MenuTool>
        <NewsPanel>为什么筏板XY方向布置..</NewsPanel>
        <UserPanel>
          <Ic n="user" />
          <span>13907298339</span>
          <Caret />
          <UserNote $ml={8}>造价豆:0</UserNote>
          <UserNote $ml={3}><Ic n="bell" /></UserNote>
          <PushRight>»</PushRight>
        </UserPanel>
      </MenuBar>

      <TopTools>
        <Bar $w={150} $gap={6}>
          <Ic n="new" />
          <ToolBtn $ml={1}><Ic n="open" /><Caret /></ToolBtn>
          <Ic n="save" />
          <Sep />
          <ToolBtn><Ic n="undo" /><Caret /></ToolBtn>
          <PushRight>»</PushRight>
        </Bar>
        <Bar $w={547} $gap={7.2}>
          <Tools list={row0a} />
          <PushRight>»</PushRight>
        </Bar>
        <BarFill $gap={6}>
          <Ic n="square" />
          <span>二维</span>
          <ComboArrow $ml={-3}><Caret /></ComboArrow>
          <Tools list={row0b} />
          <PushRight>»</PushRight>
        </BarFill>
      </TopTools>

      <Main>
        <Left>
          <PanelHead>
            模块导航栏
            <HeadSpacer />
            <Tb width="10" height="12" viewBox="0 0 10 12"><path d="M3 1h4v5H3zM1 6h8M5 6v5M6 1v5" stroke="#fff" fill="none" /></Tb>
            <Tb width="9" height="9" viewBox="0 0 9 9"><path d="M.5.500l8 8M8.500.500l-8 8" stroke="#fff" /></Tb>
          </PanelHead>
          <NavBtn $mt={1}>工程设置</NavBtn>
          <NavBtn $mt={1} $h={21}>绘图输入</NavBtn>
          <NavTools><Ic n="plus" /><Ic n="minus" /></NavTools>
          <TreeBox>
            <TreeList><TreeRows /></TreeList>
            <ScrollV>
              <ScrollBtn><Tb width="10" height="6" viewBox="0 0 10 6"><path d="M1 5l4-4 4 4" stroke="#444" strokeWidth="1.700" fill="none" /></Tb></ScrollBtn>
              <Thumb />
              <Track />
              <ScrollBtn><Tb width="10" height="6" viewBox="0 0 10 6"><path d="M1 1l4 4 4-4" stroke="#444" strokeWidth="1.700" fill="none" /></Tb></ScrollBtn>
            </ScrollV>
          </TreeBox>
          <NavBtn $mt={2}>单构件输入</NavBtn>
          <NavBtn $mt={0}>报表预览</NavBtn>
        </Left>

        <Right>
          <Row $h={26} $mt={1}>
            <Bar $w={790}>
              <Grip />
              <Tools list={row1} />
            </Bar>
          </Row>
          <Row $h={26} $mt={1}>
            <Bar $w={567} $gap={3}>
              <Grip />
              <Combo $w={56} $ml={2.5}>第2层<ComboArrow><Caret /></ComboArrow></Combo>
              <Combo $w={69}>板<ComboArrow><Caret /></ComboArrow></Combo>
              <Combo $w={69}>现浇板<ComboArrow><Caret /></ComboArrow></Combo>
              <Combo $w={69}>K-8<ComboArrow><Caret /></ComboArrow></Combo>
              <Combo $w={69}>分层1<ComboArrow><Caret /></ComboArrow></Combo>
              <Sep />
              <ToolBtn $ml={5}><Ic n="prop" />属性</ToolBtn>
              <ToolBtn $ml={7}><Ic n="edit" />编辑钢筋</ToolBtn>
              <PushRight>»</PushRight>
            </Bar>
            <Bar $w={153} $gap={6}>
              <Grip />
              <ToolBtn><Ic n="two" />两点</ToolBtn>
              <ToolBtn $ml={2}><Ic n="par" />平行</ToolBtn>
              <PushRight>»</PushRight>
            </Bar>
            <BarFill $gap={3}>
              <Grip />
              <Combo $w={58} $ml={3.5}>不偏移<ComboArrow><Caret /></ComboArrow></Combo>
              <Sep />
              <Dim>X=</Dim>
              <Spin $w={54}>0<SpinArrows><Up /><Down /></SpinArrows></Spin>
              <Dim $ml={4}>mm</Dim>
              <Dim $ml={2}>Y=</Dim>
              <Spin $w={58}>0<SpinArrows><Up /><Down /></SpinArrows></Spin>
              <Dim>mm</Dim>
              <Sep />
              <Check />
              <ToolBtn $ml={6}>旋转</ToolBtn>
              <PushRight>»</PushRight>
            </BarFill>
          </Row>
          <Row $h={23} $mt={3}>
            <StubBar $w={31}><Grip /></StubBar>
          </Row>
          <Row $h={27} $mt={3}>
            <Bar $w={1057}>
              <Grip />
              <Tools list={row3a} />
              <Combo $w={55} $ml={-4}><span /><ComboArrow><Caret /></ComboArrow></Combo>
              <Tools list={row3b} />
              <Active $ml={-3}>
                <Ic n="three" />
                三点定义斜板
              </Active>
              <Caret $tight />
              <ToolBtn><Ic n="slope" />按标高批量定义斜板<Caret /></ToolBtn>
              <ToolBtn $ml={-3}><Ic n="level" />查改标高</ToolBtn>
            </Bar>
          </Row>
          <CanvasWrap>
            <CanvasSvg width="1123" height="483" viewBox="243 194 1123 483">
              <CadLines />
            </CanvasSvg>
          </CanvasWrap>
          <Row $h={23} $mt={3} $pl={5}>
            <Bar $w={472} $gap={5}>
              <Grip />
              <ToolBtn $ml={1.5}><Ic n="ortho" />正交</ToolBtn>
              <SnapBtn><Ic n="snap" />对象捕捉</SnapBtn>
              <SnapBtn><Ic n="dyn" />动态输入</SnapBtn>
              <Grip $ml={6} />
              <ToolBtn $ml={3.5}><Ic n="inter" />交点</ToolBtn>
              <SnapBtn><Ic n="perp" />垂点</SnapBtn>
              <SnapBtn><Ic n="mid" />中点</SnapBtn>
              <ToolBtn $ml={2}><Ic n="vertex" />顶点</ToolBtn>
              <ToolBtn><Ic n="coord" />坐标</ToolBtn>
            </Bar>
          </Row>
        </Right>
      </Main>

      <Status>
        <Cell $w={147}><Code>X=12074 Y=9826</Code></Cell>
        <Cell $w={78}>层高<Code>:3m</Code></Cell>
        <Cell $w={96}>底标高<Code>:4.47m</Code></Cell>
        <Cell $w={47}><Code>0</Code></Cell>
        <Cell>按鼠标左键选择板顶点，按<Code>Enter</Code>确定或<Code>ESC</Code>取消</Cell>
        <Cell $w={70}><Code>710.4 FPS</Code></Cell>
      </Status>

      <Taskbar>
        <StartBtn>
          <Tb width="16" height="16" viewBox="0 0 16 16"><path d="M0 2.300l6.500-.9v6.200H0zM7.300 1.300L16 0v7.600H7.300zM0 8.400h6.500v6.200L0 13.700zM7.300 8.400H16V16l-8.700-1.200z" fill="#fff" /></Tb>
        </StartBtn>
        <SearchBox>
          <Ring />
          在这里输入你要搜索的内容
          <SearchMic>
            <Tb width="12" height="20" viewBox="0 0 12 20"><path d="M4 1h4v10H4zM1 8v4c0 2 2 3 5 3s5-1 5-3V8M6 15v4M3 19h6" fill="none" stroke="#9a9a9a" /></Tb>
          </SearchMic>
        </SearchBox>
        <Apps>
          <AppSlot>
            <Tb width="24" height="26" viewBox="0 0 24 26"><path d="M11 12C5 14 1 9 3 3c4-3 9 1 8 9zM13 12c-1-6 3-10 9-9 2 5-2 10-9 9zM13 14c6-2 10 2 9 9-5 2-10-3-9-9zM11 14c1 6-3 10-8 9-3-5 1-10 8-9z" fill="#e4e4e4" /></Tb>
          </AppSlot>
          <AppSlot>
            <Tb width="22" height="24" viewBox="0 0 22 24"><path d="M18 4C13 0 4 3 3 11c-1 8 9 12 14 7 3-4-1-9-6-8-3 1-3 5 0 6" fill="none" stroke="#cfcfcf" strokeWidth="2" /></Tb>
          </AppSlot>
          <AppSlot>
            <Tb width="24" height="24" viewBox="0 0 24 24"><path d="M2 13C2 5 8 1 13 1c6 0 10 4 10 11v2H8c0 5 8 7 13 3v5c-8 4-19 1-19-9zM8 10h9c0-6-8-6-9 0z" fill="#0f7ee0" /></Tb>
          </AppSlot>
          <AppSlot>
            <Tb width="22" height="24" viewBox="0 0 22 24"><path d="M1 6h20v17H1zM7 6V3c0-3 8-3 8 0v3h-2V3c0-1-4-1-4 0v3zM7 10h3v3H7zM11 10h3v3h-3zM7 14h3v3H7zM11 14h3v3h-3z" fillRule="evenodd" fill="#fff" /></Tb>
          </AppSlot>
          <AppSlot>
            <Tb width="24" height="22" viewBox="0 0 24 22"><path d="M1 3h9l2 2h11v16H1z" fill="#f6d772" /><path d="M1 7h22v14H1z" fill="#fbe89e" /><path d="M9 13h6v8H9z" fill="#3c9fe0" /></Tb>
          </AppSlot>
          <AppSlot $run>
            <Tb width="24" height="26" viewBox="0 0 24 26"><path d="M20 3C12 0 3 4 2 13c-1 8 7 13 14 10 5-2 7-7 6-12h-9l-2 4h6c-1 4-8 5-10-1C5 8 11 5 17 7z" fill="#30a0f0" /></Tb>
          </AppSlot>
          <AppSlot $run>
            <Tb width="26" height="26" viewBox="0 0 26 26"><circle cx="13" cy="14" r="10.500" fill="#8fd43a" /><path d="M7 14h12c0-8-12-8-12 0zM7 14c0 6 8 8 12 4" fill="#fff" /><path d="M2 20C6 4 18 0 24 3" fill="none" stroke="#d0e8b0" strokeWidth="1.500" /></Tb>
          </AppSlot>
          <AppSlot $on>
            <Tb width="24" height="24" viewBox="0 0 24 24"><rect width="24" height="24" rx="4" fill="#0f94f0" /><path d="M12 4v16M5 12h14M6 12c0 3 2 5 5 5M18 12c0-3-2-5-5-5M8 7h8" stroke="#fff" strokeWidth="2" fill="none" /></Tb>
          </AppSlot>
        </Apps>
        <TrayFill />
        <Cpu>57%<br />CPU使用</Cpu>
        <TrayIcon $w={24}><Tb width="12" height="7" viewBox="0 0 12 7"><path d="M1 6l5-5 5 5" fill="none" stroke="#eee" strokeWidth="1.200" /></Tb></TrayIcon>
        <TrayIcon $w={24}><Tb width="16" height="12" viewBox="0 0 16 12"><rect x="1.500" y="3.500" width="13" height="8" fill="none" stroke="#eee" /><rect x="3" y="5" width="8" height="5" fill="#eee" /><path d="M3 0v3M6 0v3" stroke="#eee" /></Tb></TrayIcon>
        <TrayIcon $w={24}><Tb width="15" height="14" viewBox="0 0 15 14"><path d="M1 13C2 7 6 3 13 1M5 13c1-3 3-5 8-7M9 13c0-2 1-3 4-3" fill="none" stroke="#ddd" strokeDasharray="2 1" /><circle cx="13" cy="12" r="1.500" fill="#fff" /></Tb></TrayIcon>
        <TrayIcon $w={22}><Tb width="16" height="14" viewBox="0 0 16 14"><path d="M1 5h3l4-4v12L4 9H1zM10 4c2 2 2 4 0 6M12 2c3 3 3 7 0 10" fill="none" stroke="#ddd" /></Tb></TrayIcon>
        <TrayIcon $w={26}>中</TrayIcon>
        <TrayIcon $w={30}><Tb width="16" height="16" viewBox="0 0 16 16"><rect width="16" height="16" rx="3" fill="#ef4a14" /><path d="M12 4C9 2 4 3 4 6s8 2 8 5-6 3-8 1" fill="none" stroke="#fff" strokeWidth="2.400" /></Tb></TrayIcon>
        <Clock>13:31<br />2017/7/4</Clock>
        <TrayIcon $w={34}><Tb width="17" height="16" viewBox="0 0 17 16"><path d="M.5.500h16v11h-5l-3 3.500-3-3.500h-5z" fill="none" stroke="#eee" /></Tb></TrayIcon>
        <ShowDesktop><DeskLine /></ShowDesktop>
      </Taskbar>

      <Annot width="1366" height="768" viewBox="0 0 1366 768">
        <ellipse cx="819" cy="572" rx="119" ry="115" fill="none" stroke="#f01010" strokeWidth="3.2" />
        <path d="M1010 202L840 443" stroke="#f01010" strokeWidth="2" />
        <path d="M833 453l4-15 8 6z" fill="#f01010" />
      </Annot>

      <SogouBar>
        <SogouLogo width="28" height="27" viewBox="0 0 28 27">
          <path d="M2 3L24 0l3 21-22 5z" fill="#ef5018" />
          <path d="M21 7C16 4 8 5 8 10c0 5 12 3 12 8s-9 5-13 2" fill="none" stroke="#fff" strokeWidth="4" />
        </SogouLogo>
        <SgHan>中</SgHan>
        <Tb width="14" height="14" viewBox="0 0 14 14"><circle cx="2" cy="3" r="1.500" fill="#1078d0" /><path d="M9 5c2 0 2 3-1 6" fill="none" stroke="#1078d0" strokeWidth="2" /></Tb>
        <Tb width="14" height="18" viewBox="0 0 14 18"><rect x="4" y="0" width="6" height="11" rx="3" fill="#1078d0" /><path d="M1 7c0 8 12 8 12 0M7 13v4M3 17h8" fill="none" stroke="#1078d0" strokeWidth="1.500" /></Tb>
        <Tb width="16" height="12" viewBox="0 0 16 12"><rect width="16" height="12" rx="2" fill="#1078d0" /><path d="M2 3h12M2 6h12" stroke="#fff" strokeDasharray="1 1" /><path d="M4 9h8" stroke="#fff" /></Tb>
        <Tb width="16" height="16" viewBox="0 0 16 16"><circle cx="7" cy="4" r="3" fill="#b8c0c8" /><path d="M1 13c0-5 3-5 6-5s4 1 4 5z" fill="#b8c0c8" /></Tb>
        <Tb width="15" height="15" viewBox="0 0 15 15"><path d="M4 0l3 1.500L11 0l4 3-2 3-1.500-1V15H3.500V5L2 6 0 3z" fill="#1078d0" /></Tb>
        <Tb width="15" height="15" viewBox="0 0 15 15"><path d="M1 13L8 6c-1-3 1-6 5-5l-3 3 1 1 3-3c1 4-2 6-5 5l-6 7z" fill="#1078d0" /></Tb>
      </SogouBar>
      <Badge><BadgeNum>62</BadgeNum></Badge>
    </Root>
  );
}
